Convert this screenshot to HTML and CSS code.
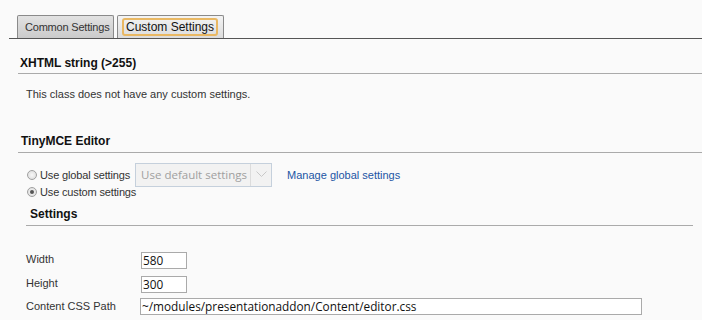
FILE: index.html
```html
<!DOCTYPE html>
<html>
<head>
<meta charset="utf-8">
<link rel="stylesheet" href="styles.css">
</head>
<body>
<div class="tabs">
  <div class="tab">Common Settings</div>
  <div class="tab active"><span class="focus">Custom Settings</span></div>
</div>
<div class="section">
  <h2 class="heading">XHTML string (&gt;255)</h2>
  <p class="note">This class does not have any custom settings.</p>
</div>
<div class="section second">
  <h2 class="heading">TinyMCE Editor</h2>
  <div class="radios">
    <div class="radio-row">
      <span class="radio"></span><span class="rlabel">Use global settings</span>
      <span class="select"><span class="select-text">Use default settings</span><span class="select-btn"><svg width="11" height="7" viewBox="0 0 11 7"><path d="M0.5 0.5 L5.5 5.5 L10.5 0.5" fill="none" stroke="#c8c8c8" stroke-width="1"/></svg></span></span>
      <a class="link">Manage global settings</a>
    </div>
    <div class="radio-row">
      <span class="radio checked"></span><span class="rlabel">Use custom settings</span>
    </div>
  </div>
  <div class="sub">
    <h3 class="subheading">Settings</h3>
    <div class="form">
      <div class="frow"><label>Width</label><span class="input small">580</span></div>
      <div class="frow"><label>Height</label><span class="input small">300</span></div>
      <div class="frow last"><label>Content CSS Path</label><span class="input wide">~/modules/presentationaddon/Content/editor.css</span></div>
    </div>
  </div>
</div>
</body>
</html>
```
FILE: styles.css
```css
html, body { margin: 0; padding: 0; }
body {
  background: #fafafa;
  font-family: "Liberation Sans", Arial, sans-serif;
  font-size: 11px;
  color: #222;
  width: 702px;
  height: 320px;
  overflow: hidden;
}
.tabs {
  display: flex;
  margin-top: 15px;
  margin-left: 9px;
  padding-left: 8px;
  gap: 3px;
  border-bottom: 1px solid #555;
  height: 23px;
}
.tab {
  box-sizing: border-box;
  height: 23px;
  border: 1px solid #8a8a8a;
  border-bottom: none;
  border-radius: 2px 2px 0 0;
  background: linear-gradient(#e2e2e2, #cbcbcb);
  color: #333;
  font-size: 11px;
  letter-spacing: -0.2px;
  white-space: nowrap;
  padding: 0 0 0 7px;
  display: flex;
  align-items: center;
  width: 97px;
}
.tab.active {
  width: 107px;
  background: linear-gradient(#f4f4f4, #dcdcdc);
  padding: 0 0 0 4px;
  color: #111;
  letter-spacing: 0;
}
.focus {
  box-sizing: border-box;
  border: 2px solid #e9b863;
  border-radius: 3px;
  padding: 0 2px;
  width: 96px;
  font-size: 12px;
  line-height: 14px;
  white-space: nowrap;
}
.section { margin-left: 18px; }
.heading {
  margin: 0;
  font-size: 12px;
  font-weight: bold;
  color: #111;
  padding: 17px 0 3px 2px;
  line-height: 14px;
  border-bottom: 1px solid #aaa;
}
.note {
  margin: 0;
  padding: 14px 0 0 8px;
  color: #333;
  font-size: 11px;
  line-height: 13px;
}
.second .heading { padding: 33px 0 4px 3px; }
.radios { padding: 13px 0 0 9px; }
.radio-row {
  display: flex;
  align-items: center;
  height: 17px;
  white-space: nowrap;
}
.radio {
  box-sizing: border-box;
  width: 10px;
  height: 10px;
  border-radius: 50%;
  border: 1px solid #a0a0a0;
  background: radial-gradient(#f8f8f8, #d8d8d8);
  margin-right: 3px;
  position: relative;
}
.radio.checked::after {
  content: "";
  position: absolute;
  left: 2px; top: 2px;
  width: 4px; height: 4px;
  border-radius: 50%;
  background: #555;
}
.rlabel { color: #333; font-size: 11px; letter-spacing: -0.15px; }
.select {
  box-sizing: border-box;
  margin: -3px 0 -3px 5px;
  height: 24px;
  width: 137px;
  border: 1px solid #c5d0dc;
  background: #f2f2f2;
  display: flex;
  align-items: center;
}
.select-text {
  flex: 1;
  padding-left: 5px;
  color: #a0a0a0;
  font-family: "Open Sans", sans-serif;
  font-size: 11.5px;
  white-space: nowrap;
}
.select-btn {
  width: 20px;
  height: 22px;
  border-left: 1px solid #dcdcdc;
  display: flex;
  align-items: center;
  justify-content: center;
}
.link {
  margin-left: 15px;
  color: #2255a4;
  font-size: 11px;
}
.sub { margin-left: 8px; margin-right: 9px; }
.subheading {
  margin: 0;
  font-size: 12px;
  font-weight: bold;
  color: #111;
  padding: 7px 0 4px 4px;
  line-height: 14px;
  border-bottom: 1px solid #aaa;
}
.form { padding-top: 22px; }
.frow {
  display: flex;
  align-items: center;
  height: 24px;
}
.frow.last { height: 20px; }
.frow label {
  width: 115px;
  color: #333;
  font-size: 11px;
  padding-bottom: 2px;
}
.frow.last label { padding-bottom: 0; }
.input {
  box-sizing: border-box;
  height: 17px;
  border: 1px solid #aaa;
  background: #fff;
  font-family: "Open Sans", sans-serif;
  font-size: 11.8px;
  line-height: 15px;
  padding-left: 1px;
  color: #111;
  white-space: nowrap;
}
.small { width: 46px; }
.wide { width: 502px; margin-left: -1px; }
```
